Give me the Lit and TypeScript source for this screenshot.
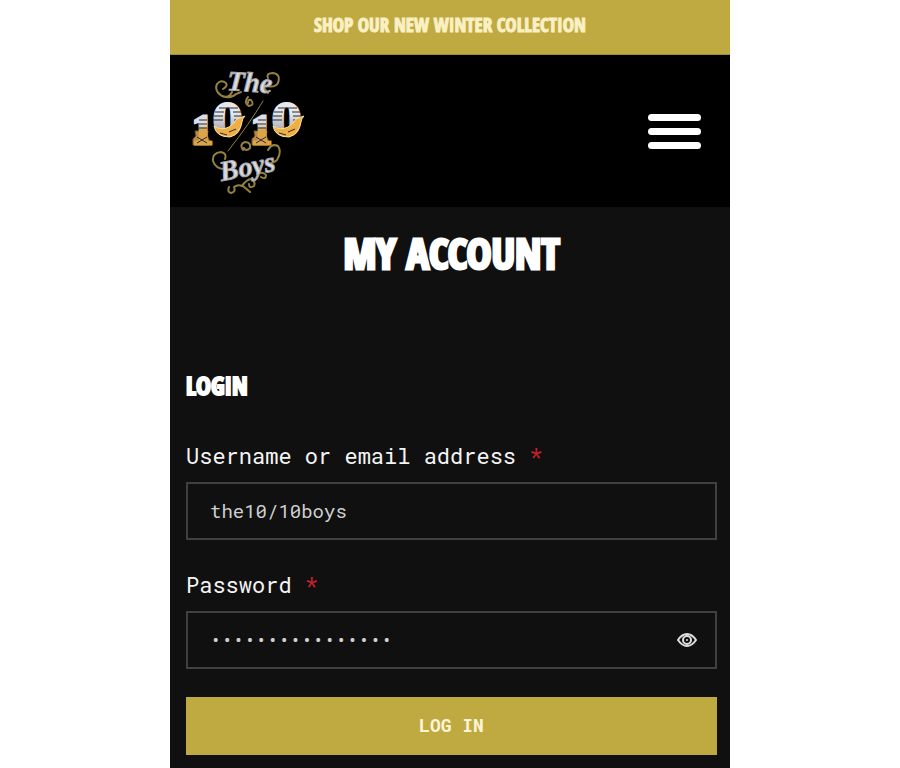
import { LitElement, html, css, svg } from "lit";
import { customElement, property, state } from "lit/decorators.js";

@customElement("brand-logo")
export class BrandLogo extends LitElement {
  static styles = css`
    :host { display: block; }
    svg { display: block; width: 112px; height: 130px; }
    .word { font-family: "Liberation Serif", serif; font-weight: 700; font-style: italic; }
    .script { font-size: 28px; fill: #dcdce0; stroke: #a5a5aa; stroke-width: 1px; }
    .digit { font-weight: 700; fill: url(#metal); }
    .one { font-family: "Liberation Serif", serif; font-size: 42px; fill: url(#pillar); stroke: url(#pillar); stroke-width: 3px; }
    .zero { font-family: "DejaVu Serif", serif; font-size: 42px; stroke: url(#metal); stroke-width: 3px; }
    .curl { fill: none; stroke: #94803f; stroke-width: 2px; stroke-linecap: round; }
    .fine { stroke-width: 1px; }
    .stripe { fill: none; stroke: #29292e; stroke-width: 1px; }
    .base { fill: #c08a3c; stroke: #7c5a2a; stroke-width: 1px; }
    .glow { fill: #eeb044; stroke: #f4dda2; stroke-width: 1px; }
  `;

  private number(x: number) {
    return svg`
      <g transform="translate(${x} 0)">
        <path class="base" d="M3 65h13l-1 5l2 3v6H1v-6l3-3z"/>
        <text class="digit" x="0" y="78"><tspan class="one">1</tspan><tspan class="zero" x="21" y="69">0</tspan></text>
        <path class="stripe" d="M7 54h8M7 58h8M7 62h8M5 71l10 6M15 71l-10 6"/>
        <path class="stripe" d="M27 42h19M23 46h9M41 46h9M22 50h9M42 50h9M21 54h10M42 54h9"/>
        <path class="glow" d="M22 60q7 5 15 1q6-4 8-8l8-3q-3 3-3 6q-2 12-12 15q-14 0-16-11z"/>
        <path class="stripe" d="M28 67l7 2M37 66l7-3"/>
      </g>`;
  }

  render() {
    return html`
      <svg viewBox="0 0 112 130" role="img" aria-label="The 10/10 Boys">
        <defs>
          <linearGradient id="metal" x1="0" y1="0" x2="0" y2="1">
            <stop offset="0.3" stop-color="#e8e8ec"/>
            <stop offset="0.55" stop-color="#b4b4ba"/>
            <stop offset="0.65" stop-color="#f0bf59"/>
            <stop offset="1" stop-color="#bd8430"/>
          </linearGradient>
          <linearGradient id="pillar" x1="0" y1="0" x2="0" y2="1">
            <stop offset="0.5" stop-color="#dedee4"/>
            <stop offset="0.6" stop-color="#d9a44c"/>
          </linearGradient>
        </defs>
        <path class="curl" d="M31 23q5-3 3-6q-5-4-9 1q-3 7 5 12q9 3 14-2l5-2M75 20q8 2 11-3q3-9-5-10q-7 0-5 5M71 21l5 6M30 30q7 3 10-4"/>
        <path class="curl" d="M56 31q-5 6 1 9q6-1 2-6q-3-1-3 3"/>
        <text class="word script" x="35" y="25" transform="rotate(4 50 20)">The</text>
        <path class="curl fine" d="M71 35Q58 57 36 85"/>
        ${this.number(0)} ${this.number(59)}
        <path class="curl" d="M33 93q2-6-4-7q-9 1-8 9q3 9 14 8M76 84q4-7 10-4q4 6-1 14q-6 5-11 3M51 84q-4-6 2-8q6 0 5 6q-4 4-6 0"/>
        <path class="curl" d="M37 121q-2 5 2 6q5-1 3-6q4-3 8-1q4-6 9-7q5 2 3 7q-5 3-5-2M51 120l7 6M65 108q6-3 9 1q0 5-5 2"/>
        <text class="word script" x="28" y="111" transform="rotate(-11 50 105)">Boys</text>
      </svg>`;
  }
}

@customElement("app-root")
export class AppRoot extends LitElement {
  @state() private reveal = false;
  @property() username = "the10/10boys";

  static styles = css`
    :host {
      display: block;
      min-height: 100vh;
      background: #fff;
      --gold: #bfaa41;
      --display: "Open Sans Condensed", "Liberation Sans Narrow", "Liberation Sans", sans-serif;
      --mono: "Roboto Mono", "Liberation Mono", monospace;
      font-family: var(--mono);
      color: #fff;
    }
    * { box-sizing: border-box; }
    .page { max-width: 560px; min-height: 100vh; margin: 0 auto; background: #101010; }
    .banner {
      margin: 0;
      padding: 13px 16px 16px;
      background: var(--gold);
      border-bottom: 1px solid #9b8e4a;
      color: #fbf0c4;
      font: 700 19px/25px var(--display);
      -webkit-text-stroke: 1px currentColor;
      text-align: center;
    }
    .header {
      display: flex;
      justify-content: space-between;
      align-items: center;
      padding: 11px 29px 11px 22px;
      background: #000;
    }
    .home { display: block; }
    .menu {
      display: flex;
      flex-direction: column;
      gap: 7px;
      padding: 0;
      border: 0;
      background: none;
      cursor: pointer;
    }
    .bar { width: 53px; height: 7px; border-radius: 4px; background: #fff; }
    .content { padding: 16px 13px 13px 16px; }
    .title { margin: 0; font: 700 42px/60px var(--display); text-align: center; -webkit-text-stroke: 3px currentColor; }
    .subtitle { margin: 86px 0 38px; font: 700 25px/32px var(--display); -webkit-text-stroke: 2px currentColor; }
    .form { display: flex; flex-direction: column; gap: 28px; }
    .field { display: flex; flex-direction: column; gap: 10px; }
    .label { font-size: 22px; line-height: 33px; color: #f4f4f4; }
    .required { color: #c5202c; }
    .control { display: flex; align-items: center; height: 58px; border: 2px solid #404040; padding: 0 18px 0 22px; }
    .input {
      flex: 1;
      min-width: 0;
      padding: 0;
      border: 0;
      outline: 0;
      background: none;
      color: #cfcfcf;
      font: 19px/28px var(--mono);
    }
    .eye { display: flex; padding: 0; border: 0; background: none; color: #ddd; cursor: pointer; }
    .eye svg { width: 20px; height: 16px; }
    .submit {
      height: 58px;
      padding: 0 0 2px;
      border: 0;
      background: var(--gold);
      color: #fdf5d8;
      font: 700 18px/28px var(--mono);
      cursor: pointer;
    }
  `;

  render() {
    return html`
      <div class="page">
        <p class="banner">SHOP OUR NEW WINTER COLLECTION</p>
        <header class="header">
          <a class="home" href="#" aria-label="The 10/10 Boys"><brand-logo></brand-logo></a>
          <button class="menu" type="button" aria-label="Menu">
            <span class="bar"></span><span class="bar"></span><span class="bar"></span>
          </button>
        </header>
        <main class="content">
          <h1 class="title">MY ACCOUNT</h1>
          <h2 class="subtitle">LOGIN</h2>
          <form class="form" @submit=${(e: Event) => e.preventDefault()}>
            <div class="field">
              <label class="label" for="user">Username or email address <span class="required">*</span></label>
              <div class="control">
                <input class="input" id="user" type="text" autocomplete="username" .value=${this.username} required />
              </div>
            </div>
            <div class="field">
              <label class="label" for="pass">Password <span class="required">*</span></label>
              <div class="control">
                <input class="input" id="pass" type=${this.reveal ? "text" : "password"} autocomplete="current-password" value="winter-1010-boys" required />
                <button class="eye" type="button" aria-label="Show password" @click=${() => (this.reveal = !this.reveal)}>
                  <svg viewBox="0 0 20 16" fill="none" stroke="currentColor" stroke-width="2" aria-hidden="true">
                    <path d="M1 8Q5 2 10 2t9 6q-4 6-9 6T1 8z"/>
                    <circle cx="10" cy="8" r="4"/>
                    <circle cx="10" cy="8" r="1" fill="currentColor" stroke="none"/>
                  </svg>
                </button>
              </div>
            </div>
            <button class="submit" type="submit">LOG IN</button>
          </form>
        </main>
      </div>`;
  }
}
